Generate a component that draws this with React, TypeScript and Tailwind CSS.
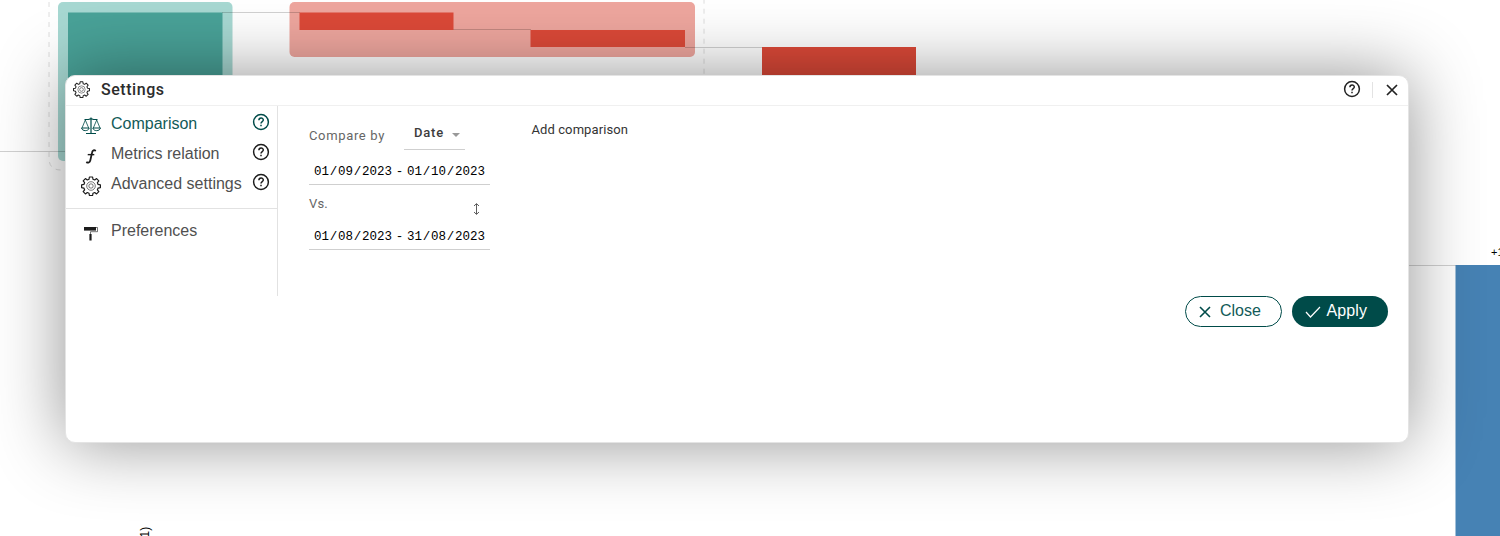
import type { ReactNode } from "react";

function Gear({ className }: { className: string }) {
  return (
    <svg viewBox="0 0 20 20" className={className} fill="none" stroke="currentColor">
      <path
        strokeWidth="1.2"
        strokeLinejoin="round"
        d="M8.4 1h3.2l.4 2.3 1.7.7 1.9-1.4 2.2 2.2-1.4 1.9.7 1.7 2.3.4v2.8l-2.3.5-.7 1.7 1.4 1.9-2.2 2.2-1.9-1.4-1.7.7-.4 2.3H8.4L8 17.2l-1.7-.7-1.9 1.4-2.2-2.2 1.4-1.9-.7-1.7-2.3-.5V8.8l2.3-.4.7-1.7-1.4-1.9 2.2-2.2L6.300 4 8 3.300z"
      />
      <circle cx="10" cy="10" r="4.300" strokeWidth=".6" />
      <circle cx="10" cy="10" r="2.200" strokeWidth=".6" />
    </svg>
  );
}

function Help({ className }: { className: string }) {
  return (
    <svg viewBox="0 0 18 18" className={className} fill="none" stroke="currentColor" strokeWidth="1.500">
      <circle cx="9" cy="9" r="7.400" />
      <path d="M6.900 7.300c0-3 4.400-2.900 4.400-.3 0 1.600-2.300 1.500-2.300 3.400M9 11.800v1.500" />
    </svg>
  );
}

function Scales() {
  return (
    <svg viewBox="0 0 20 18" className="h-[18px] w-5" fill="none" stroke="currentColor">
      <path d="M10 .5v15.500M3.500 2.500h4l2.500-.8 2.500.8h4M5 16.500h10" strokeWidth="1.200" />
      <path d="M4.300 3 1 11M4.300 3l3.400 8M15.700 3l-3.400 8M15.700 3 19 11" strokeWidth=".8" />
      <path d="M.5 11h7.700c-.8 3.500-6.900 3.500-7.700 0zM11.800 11h7.700c-.8 3.500-6.900 3.500-7.700 0z" strokeWidth="1" />
    </svg>
  );
}

function FunctionIcon() {
  return (
    <svg viewBox="0 0 12 16" className="h-[15px] w-3" fill="none" stroke="currentColor">
      <path d="M11 2.200C9.500.5 7.600 1.400 7.200 3.500L5.300 12c-.5 2.500-2.500 3.200-4.300 1.800" strokeWidth="1.900" />
      <path d="M2.500 6h7" strokeWidth="1.500" />
    </svg>
  );
}

function Roller() {
  return (
    <svg viewBox="0 0 14 15" className="h-[15px] w-3.5" fill="none" stroke="currentColor">
      <path d="M0 2.800h12" strokeWidth="3.600" />
      <path d="M12 1.500h1.500v4.200H6.500v3" strokeWidth="1" strokeOpacity=".6" />
      <path d="M6.500 8v6.500" strokeWidth="2.200" />
    </svg>
  );
}

function MenuItem({ icon, label, active, help = true }: { icon: ReactNode; label: string; active?: boolean; help?: boolean }) {
  return (
    <div className={`flex h-[30px] items-center ${active ? "text-[#004b49]" : "text-[#1c1c1c]"}`}>
      <span className="mt-[4px] flex w-[49px] shrink-0 justify-center">{icon}</span>
      <span className={`-ml-[4px] w-[141px] text-[16px] ${active ? "text-[#125a58]" : "text-[#505050]"}`}>{label}</span>
      {help && <Help className="-mt-[5px] h-[18px] w-[18px]" />}
    </div>
  );
}

function DateText({ parts }: { parts: string[] }) {
  return (
    <span className="flex">
      <span>{parts[0]}</span>
      <span className="w-[9px] text-center">/</span>
      <span>{parts[1]}</span>
      <span className="w-[9px] text-center">/</span>
      <span>{parts[2]}</span>
    </span>
  );
}

function DateRange({ from, to }: { from: string[]; to: string[] }) {
  return (
    <div className="flex h-[29px] w-[181px] items-center border-b border-[#cfcfcf] pl-[5px] pt-[5px] font-['Liberation_Mono',monospace] text-[12.500px] text-black">
      <DateText parts={from} />
      <span className="w-[15px] text-center">-</span>
      <DateText parts={to} />
    </div>
  );
}

function Chart() {
  return (
    <svg viewBox="0 0 1500 536" className="absolute inset-0 h-[536px] w-[1500px]">
      <path d="M49 0V158q0 12 12 12h631q12 0 12-12V0" fill="none" stroke="#dedede" strokeDasharray="5 5" strokeDashoffset="-2" />
      <rect x="58" y="2" width="174.500" height="159" rx="5" fill="#a7d8d2" />
      <rect x="68" y="12.500" width="154.500" height="139" fill="#49a298" />
      <rect x="289.500" y="2" width="405.500" height="55" rx="5" fill="#eea69e" />
      <path d="M222 12.500h78M453 29.500h78M685 47.500h78M0 151.500h68M1300 265.500h156" stroke="#000" strokeOpacity=".18" />
      <rect x="299.500" y="12.500" width="154" height="17.500" fill="#dc4938" />
      <rect x="530.500" y="30" width="154.500" height="17" fill="#dc4938" />
      <rect x="762" y="47" width="154" height="105" fill="#dc4938" />
      <rect x="1455.500" y="265" width="44.500" height="271" fill="#4682b4" />
      <text x="1491" y="256" fontSize="11" className="font-['Liberation_Sans',sans-serif]">+1</text>
      <text transform="translate(148.500 537.500) rotate(-90)" fontSize="12" className="font-['Liberation_Sans',sans-serif]">1)</text>
    </svg>
  );
}

export default function App() {
  return (
    <div className="relative h-[536px] w-[1500px] overflow-hidden bg-white pl-[65px] pt-[74.500px] font-['Liberation_Sans',sans-serif]">
      <Chart />
      <section className="relative flex h-[368px] w-[1343.500px] flex-col rounded-[10px] border border-[#e4e4e4] bg-white shadow-[0_0_70px_rgba(0,0,0,0.43)]">
        <header className="flex h-[30.500px] shrink-0 items-center border-b border-[#f0f0f0] text-[#222]">
          <Gear className="ml-[6.500px] -mt-px h-[17px] w-[17px]" />
          <h1 className="ml-[11.500px] -mt-px flex-1 font-['Roboto',sans-serif] text-[16px] font-medium tracking-[0.550px] text-[#2c2c2c]">Settings</h1>
          <Help className="-mt-[2px] h-[18px] w-[18px]" />
          <span className="-mt-px ml-[11px] mr-[13px] h-4 w-px bg-[#e3e3e3]" />
          <svg viewBox="0 0 12 12" className="-mt-px mr-[10px] h-3 w-3" stroke="currentColor" strokeWidth="1.700">
            <path d="m1 1 10 10M11 1 1 11" />
          </svg>
        </header>
        <div className="flex h-[190px]">
          <nav className="flex w-[212px] shrink-0 flex-col border-r border-[#e2e2e2] pt-[3px]">
            <MenuItem icon={<Scales />} label="Comparison" active />
            <MenuItem icon={<FunctionIcon />} label="Metrics relation" />
            <MenuItem icon={<Gear className="h-5 w-5" />} label="Advanced settings" />
            <hr className="mb-[7px] mt-[9px] border-[#e2e2e2]" />
            <MenuItem icon={<Roller />} label="Preferences" help={false} />
          </nav>
          <div className="ml-[31px] w-[222.500px] pt-[13.500px] font-['Roboto',sans-serif]">
            <div className="flex h-[30px]">
              <span className="w-[95px] pt-[6px] text-[13px] leading-5 tracking-[0.650px] text-[#666]">Compare by</span>
              <span className="flex w-[61px] items-start justify-center gap-2 border-b border-[#cfcfcf] pl-[5px] pt-[3px] text-[13px] font-medium leading-5 tracking-[0.850px] text-[#3c3c3c]">
                Date
                <svg viewBox="0 0 8 4" className="mt-[10px] h-1 w-2" fill="#999"><path d="M0 0h8L4 4z" /></svg>
              </span>
            </div>
            <div className="mt-[6px]">
              <DateRange from={["01", "09", "2023"]} to={["01", "10", "2023"]} />
            </div>
            <div className="flex h-[36px] w-[181px] justify-between pr-[10px]">
              <span className="pt-[9px] text-[13px] leading-5 tracking-[0.1px] text-[#666]">Vs.</span>
              <svg viewBox="0 0 7 12" className="mt-[18px] h-3 w-[7px]" fill="none" stroke="#333" strokeWidth=".8">
                <path d="M3.500 1v10M1 3l2.500-2.400L6 3M1 9l2.500 2.400L6 9" />
              </svg>
            </div>
            <DateRange from={["01", "08", "2023"]} to={["31", "08", "2023"]} />
          </div>
          <span className="pt-[13.500px] font-['Roboto',sans-serif] text-[13px] leading-5 tracking-[0.090px] text-[#333]">Add comparison</span>
        </div>
        <footer className="flex justify-end gap-[10px] pr-[20px] text-[16px]">
          <button className="flex h-[31px] w-[97px] items-center rounded-full border border-[#004b49] pl-[13.500px] text-[#004b49]">
            <svg viewBox="0 0 12 12" className="mt-px h-3 w-3" stroke="currentColor" strokeWidth="1.600"><path d="m1 1 10 10M11 1 1 11" /></svg>
            <span className="-mt-px ml-[9px] text-[#125a58]">Close</span>
          </button>
          <button className="flex h-[31px] w-[96px] items-center rounded-full bg-[#004b49] pl-[13px] text-white">
            <svg viewBox="0 0 16 12" className="mt-px h-3 w-4" fill="none" stroke="currentColor" strokeWidth="1.200"><path d="m1 6 4.500 5L15 1" /></svg>
            <span className="-mt-px ml-[6px] tracking-[0.1px]">Apply</span>
          </button>
        </footer>
      </section>
    </div>
  );
}
